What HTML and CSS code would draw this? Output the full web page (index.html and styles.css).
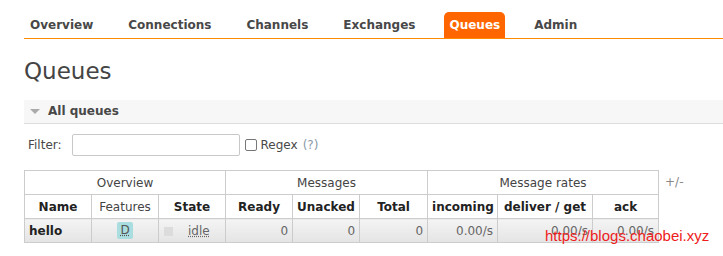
FILE: index.html
```html
<!DOCTYPE html>
<html>
<head>
<meta charset="utf-8">
<link rel="stylesheet" href="styles.css">
</head>
<body>
<div class="page">
  <ul class="nav">
    <li>Overview</li>
    <li>Connections</li>
    <li>Channels</li>
    <li>Exchanges</li>
    <li class="active">Queues</li>
    <li>Admin</li>
  </ul>
  <h1 class="title">Queues</h1>
  <div class="section-head"><span class="tri"></span>All queues</div>
  <div class="filter">
    <label class="flabel">Filter:</label>
    <span class="input"></span>
    <span class="check"></span>
    <span class="regex">Regex</span>
    <span class="help">(?)</span>
  </div>
  <div class="table-wrap">
    <table class="list">
      <colgroup>
        <col class="c67"><col class="c67"><col class="c67">
        <col class="c67"><col class="c67"><col class="c68">
        <col class="c70"><col class="c95"><col class="c66">
      </colgroup>
      <thead>
        <tr class="group">
          <th colspan="3">Overview</th>
          <th colspan="3">Messages</th>
          <th colspan="3">Message rates</th>
        </tr>
        <tr class="cols">
          <th>Name</th>
          <th class="plain">Features</th>
          <th>State</th>
          <th>Ready</th>
          <th>Unacked</th>
          <th>Total</th>
          <th>incoming</th>
          <th>deliver / get</th>
          <th>ack</th>
        </tr>
      </thead>
      <tbody>
        <tr class="row">
          <td class="name">hello</td>
          <td class="center"><span class="feat">D</span></td>
          <td class="state"><span class="dot"></span><span class="idle">idle</span></td>
          <td class="num">0</td>
          <td class="num">0</td>
          <td class="num">0</td>
          <td class="num">0.00/s</td>
          <td class="num">0.00/s</td>
          <td class="num">0.00/s</td>
        </tr>
      </tbody>
    </table>
    <span class="plusminus">+/-</span>
  </div>
</div>
<div class="watermark">https://blogs.chaobei.xyz</div>
</body>
</html>
```

FILE: styles.css
```css
html, body {
  margin: 0;
  padding: 0;
  background: #fff;
}
body {
  font-family: "DejaVu Sans", Verdana, sans-serif;
  font-size: 12px;
  color: #484848;
  position: relative;
  height: 256px;
  overflow: hidden;
}
.page {
  padding-left: 24px;
}
.nav {
  list-style: none;
  margin: 12px 0 0 0;
  padding: 0;
  display: flex;
  border-bottom: 1px solid #ff8a00;
}
.nav li {
  font-weight: bold;
  font-size: 12px;
  line-height: 26px;
  height: 26px;
  padding: 0 6px;
  margin-right: 23px;
  color: #484848;
}
.nav li.active {
  background: #ff6600;
  color: #fff;
  border-radius: 5px 5px 0 0;
  padding: 0 5px;
}
.title {
  font-weight: normal;
  font-size: 23px;
  line-height: 28px;
  margin: 18px 0 0 0;
  color: #444;
}
.section-head {
  margin-top: 15px;
  height: 23px;
  line-height: 23px;
  background: #f7f7f7;
  border-bottom: 1px solid #dddddd;
  font-weight: bold;
  display: flex;
  align-items: center;
  padding-left: 6px;
}
.tri {
  width: 0;
  height: 0;
  border-left: 5px solid transparent;
  border-right: 5px solid transparent;
  border-top: 5px solid #aaa;
  margin-right: 8px;
}
.filter {
  display: flex;
  align-items: center;
  margin-top: 10px;
  height: 22px;
  padding-left: 4px;
}
.flabel {
  margin-right: 10px;
}
.input {
  width: 166px;
  height: 20px;
  border: 1px solid #c8c8c8;
  border-radius: 2px;
  margin-right: 5px;
}
.check {
  width: 10px;
  height: 10px;
  border: 1px solid #777;
  border-radius: 2px;
  margin-right: 4px;
}
.regex {
  margin-right: 5px;
}
.help {
  color: #8a9aa8;
}
.table-wrap {
  display: flex;
  align-items: flex-start;
  margin-top: 14px;
}
.list {
  border-collapse: collapse;
  table-layout: fixed;
  width: 635px;
}
.c67 { width: 67px; }
.c68 { width: 68px; }
.c70 { width: 70px; }
.c95 { width: 95px; }
.c66 { width: 66px; }
.list th, .list td {
  border: 1px solid #cccccc;
  height: 23px;
  padding: 0 4px;
  white-space: nowrap;
}
.group th {
  font-weight: normal;
  color: #444;
  text-align: center;
}
.cols th {
  font-weight: bold;
  color: #222;
  text-align: center;
}
.cols th.plain {
  font-weight: normal;
  color: #444;
}
.row td {
  background: linear-gradient(#f4f4f4, #e4e4e4);
  color: #666;
}
.row td.name {
  font-weight: bold;
  color: #222;
  text-align: left;
}
.center {
  text-align: center;
}
.feat {
  display: inline-block;
  background: #aadde0;
  color: #555;
  padding: 1px 3px;
  border-radius: 2px;
  text-decoration: underline dotted;
  line-height: 15px;
}
.dot {
  display: inline-block;
  width: 9px;
  height: 9px;
  background: #dcdcdc;
  vertical-align: middle;
  margin-left: 1px;
}
.idle {
  display: inline-block;
  margin-left: 15px;
  text-decoration: underline dotted;
  color: #666;
}
.num {
  text-align: right;
}
.plusminus {
  color: #888;
  margin-left: 6px;
  margin-top: 5px;
}
.watermark {
  position: absolute;
  left: 545px;
  top: 227px;
  font-family: "Liberation Sans", "Noto Sans", sans-serif;
  font-size: 15px;
  line-height: 18px;
  color: #ee1c1c;
}
```
